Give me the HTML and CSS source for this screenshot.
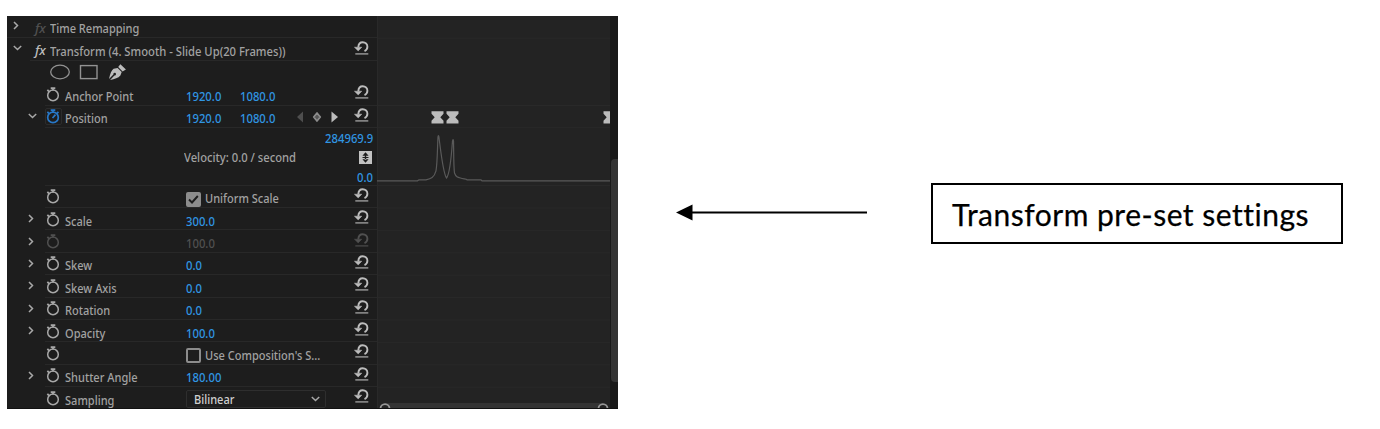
FILE: index.html
```html
<!DOCTYPE html>
<html lang="en">
<head>
<meta charset="utf-8">
<title>Transform pre-set settings</title>
<link rel="stylesheet" href="styles.css">
</head>
<body>
<svg class="defs" width="0" height="0">
  <symbol id="watch" viewBox="0 0 14 15"><g fill="none" stroke="currentColor"><circle cx="7" cy="8.4" r="5.3" stroke-width="1.5"/><path d="M4.7 1.1h4.6M7 1.2v2.2M2.9 4.6 1.4 2.7" stroke-width="1.7"/></g></symbol>
  <symbol id="watch-on" viewBox="0 0 14 15"><g fill="none" stroke="currentColor"><circle cx="7" cy="8.4" r="5.3" stroke-width="1.7"/><path d="M4.7 1.1h4.6M7 1.2v2.2M2.9 4.6 1.4 2.7M6.5 9l3-3.4M11 4.5l1.4-1.6" stroke-width="1.7"/></g></symbol>
  <symbol id="reset" viewBox="0 0 15 14"><path d="M4.3 6.2C4.5 2.900 6.200 1.200 8.700 1.200c2.700 0 4.700 2 4.700 4.600 0 2-1.100 3.500-2.900 4.300" fill="none" stroke="currentColor" stroke-width="1.900"/><path d="M.4 6.200h7.400L4.200 9.900z" fill="currentColor" stroke="currentColor" stroke-width=".5"/><path d="M1.300 12.900h13" stroke="currentColor" stroke-width="1.400" opacity=".8"/></symbol>
  <symbol id="right" viewBox="0 0 6 9"><path d="M1 1l3.500 3.500L1 8" fill="none" stroke="currentColor" stroke-width="1.500"/></symbol>
  <symbol id="down" viewBox="0 0 9 6"><path d="M.8 1l3.700 3.500L8.200 1" fill="none" stroke="currentColor" stroke-width="1.500"/></symbol>
</svg>
<main class="page">
  <section class="panel">
    <div class="controls">
      <div class="row head first"><svg class="chev"><use href="#right"/></svg><span class="fx off">fx</span><span class="title remap">Time Remapping</span></div>
      <div class="row head"><svg class="chev open"><use href="#down"/></svg><span class="fx">fx</span><span class="title transform">Transform (4. Smooth - Slide Up(20 Frames))</span><svg class="reset"><use href="#reset"/></svg></div>
      <div class="row tools">
        <svg width="80" height="18" viewBox="0 0 80 18"><ellipse cx="11" cy="9" rx="9.300" ry="6.800" fill="none" stroke="#929292" stroke-width="1.300"/><rect x="31.500" y="2.600" width="16.500" height="13" fill="none" stroke="#929292" stroke-width="1.400"/><path d="M60 16c1.200-5.500 2.500-8.800 4.600-10.200l4-.8 4.100 4-1.300 3.600c-2.200 2.600-5.500 3.500-10.300 4.400l4.300-4.600a1.300 1.300 0 1 0-1-1zM69.200 4l2.200-2.700 5.500 5.100-3.300 2z" fill="#bcbcbc"/></svg>
      </div>
      <div class="row param"><span class="arrow"></span><svg class="watch"><use href="#watch"/></svg><span class="label">Anchor Point</span><span class="num x">1920.0</span><span class="num">1080.0</span><svg class="reset"><use href="#reset"/></svg></div>
      <div class="row param"><span class="arrow"><svg class="chev open"><use href="#down"/></svg></span><span class="active"><svg class="watch"><use href="#watch-on"/></svg></span><span class="label">Position</span><span class="num x">1920.0</span><span class="num">1080.0</span>
        <svg class="keys" width="42" height="12" viewBox="0 0 42 12"><path d="M6 .5v11L0 6z" fill="#4e4e4e"/><path d="M20 2l3.300 4-3.300 4-3.300-4z" fill="#555" stroke="#8c8c8c" stroke-width="1.700" stroke-linejoin="round"/><path d="M34.500.5v11L41 6z" fill="#bcbcbc"/></svg>
        <svg class="reset"><use href="#reset"/></svg></div>
      <div class="row velocity">
        <span class="speed">Velocity: 0.0 / second</span>
        <div class="range"><span class="num">284969.9</span><svg width="13" height="13" viewBox="0 0 13 13"><path d="M0 0h13v13H0z" fill="#c2c2c2"/><path d="M6.500 1.300 9.600 4.700H3.400zM6.500 11.700 9.600 8.300H3.400zM3.500 6h6v1h-6zM5.800 4h1.400v5H5.800z" fill="#1d1d1d"/></svg><span class="num">0.0</span></div>
      </div>
      <div class="row param"><span class="arrow"></span><svg class="watch"><use href="#watch"/></svg><span class="label"></span><span class="check on"><svg width="11" height="9" viewBox="0 0 11 9"><path d="M1 4.500l3 3L9.800 1" fill="none" stroke="#1d1d1d" stroke-width="1.900"/></svg></span><span class="option">Uniform Scale</span><svg class="reset"><use href="#reset"/></svg></div>
      <div class="row param"><span class="arrow"><svg class="chev"><use href="#right"/></svg></span><svg class="watch"><use href="#watch"/></svg><span class="label">Scale</span><span class="num">300.0</span><svg class="reset"><use href="#reset"/></svg></div>
      <div class="row param disabled"><span class="arrow"><svg class="chev"><use href="#right"/></svg></span><svg class="watch"><use href="#watch"/></svg><span class="label"></span><span class="num">100.0</span><svg class="reset"><use href="#reset"/></svg></div>
      <div class="row param"><span class="arrow"><svg class="chev"><use href="#right"/></svg></span><svg class="watch"><use href="#watch"/></svg><span class="label">Skew</span><span class="num">0.0</span><svg class="reset"><use href="#reset"/></svg></div>
      <div class="row param"><span class="arrow"><svg class="chev"><use href="#right"/></svg></span><svg class="watch"><use href="#watch"/></svg><span class="label">Skew Axis</span><span class="num">0.0</span><svg class="reset"><use href="#reset"/></svg></div>
      <div class="row param"><span class="arrow"><svg class="chev"><use href="#right"/></svg></span><svg class="watch"><use href="#watch"/></svg><span class="label">Rotation</span><span class="num">0.0</span><svg class="reset"><use href="#reset"/></svg></div>
      <div class="row param"><span class="arrow"><svg class="chev"><use href="#right"/></svg></span><svg class="watch"><use href="#watch"/></svg><span class="label">Opacity</span><span class="num">100.0</span><svg class="reset"><use href="#reset"/></svg></div>
      <div class="row param"><span class="arrow"></span><svg class="watch"><use href="#watch"/></svg><span class="label"></span><span class="check"></span><span class="option">Use Composition's S...</span><svg class="reset"><use href="#reset"/></svg></div>
      <div class="row param"><span class="arrow"><svg class="chev"><use href="#right"/></svg></span><svg class="watch"><use href="#watch"/></svg><span class="label">Shutter Angle</span><span class="num">180.00</span><svg class="reset"><use href="#reset"/></svg></div>
      <div class="row param"><span class="arrow"></span><svg class="watch"><use href="#watch"/></svg><span class="label">Sampling</span><span class="select"><span class="value">Bilinear</span><svg width="9" height="6"><use href="#down"/></svg></span><svg class="reset"><use href="#reset"/></svg></div>
    </div>
    <svg class="timeline" width="233" height="393" viewBox="0 0 233 393">
      <path d="M0 22.200h233M0 89.500h233M0 111.700h233M0 169.500h233M0 192h233M0 214.400h233M0 236.800h233M0 259.200h233M0 281.600h233M0 304h233M0 326.400h233M0 348.800h233M0 371.200h233M.5 0v393" stroke="#292929" fill="none"/>
      <g fill="#bcbcbc">
        <path id="key" d="M54.500 95.200h12v2.600l-3.200 3.500 3.200 3.500v2.600h-12v-2.600l3.200-3.500-3.200-3.500z"/>
        <use href="#key" x="15"/>
        <use href="#key" x="172"/>
      </g>
      <path d="M0 164.800h40.500l1.500-1h7c5-1 8-2 10-9 1.500-8 1.500-28 2-34 .2-1.500.7-1.500.9 0C63.500 133 66 157 69.500 162c3.500-4 5-23 6-37 .3-1.800.9-1.800 1 0 .3 10 0 25 1 32 1.500 4 3 4.500 6 5 3 1 6 .8 6.500 1.800h14l1 1H233" fill="none" stroke="#5a5a5a" stroke-width="1.200"/>
      <path d="M8 387h218v6H8z" fill="#343434"/>
      <g fill="#232323" stroke="#969696" stroke-width="1.800"><circle cx="8" cy="392.600" r="4.500"/><circle cx="226" cy="392.600" r="4.500"/></g>
    </svg>
    <div class="scrollbar"><div class="thumb"></div></div>
  </section>
  <svg class="pointer" width="191" height="18" viewBox="0 0 191 18"><path d="M15 9.500h176" stroke="#000" stroke-width="1.900"/><path d="M0 9.500 16.500 1.500v16z"/></svg>
  <aside class="callout"><span>Transform pre-set settings</span></aside>
</main>
</body>
</html>
```

FILE: styles.css
```css
* { box-sizing: border-box; }
body { margin: 0; background: #fff; font-family: "Noto Sans", sans-serif; }
.defs { position: absolute; }
.page { display: flex; align-items: flex-start; height: 429px; padding: 16px 0 0 7px; }
svg { display: block; flex: none; }

.panel { display: flex; flex: none; width: 611px; height: 393px; background: #1d1d1d; overflow: hidden; border-bottom: 1px solid #111; }
.controls { width: 370px; font-size: 12px; font-weight: 500; line-height: 16px; color: #a2a2a2; white-space: nowrap; }
.row { display: flex; align-items: center; height: 22.4px; padding-right: 8px; }
.row > .reset { width: 15px; height: 14px; margin: 0 0 4px auto; color: #bcbcbc; }
.chev { width: 6px; height: 9px; color: #a8a8a8; }
.chev.open { width: 9px; height: 6px; }
.title, .label, .num, .speed, .option, .value { transform: scaleX(.92); transform-origin: 0 50%; }

.head { padding-left: 6px; background: linear-gradient(#282828, #282828) 23px 100% / 100% 1px no-repeat; }
.head > .chev { margin-right: 17px; margin-bottom: 3px; }
.head > .chev.open { margin-right: 14px; }
.first { background-position: 0 100%; }
.fx { flex: none; width: 14px; font-size: 13px; font-style: italic; font-weight: 500; color: #bcbcbc; padding-top: 1px; margin-left: -1px; margin-right: 1px; }
.fx.off { color: #505050; }
.title { padding-top: 4px; }
.title.transform { transform: scaleX(.937); }

.tools { padding-left: 42px; }
.param { padding-left: 21px; background: linear-gradient(#282828, #282828) 38px 100% / 100% 1px no-repeat; }
.param:last-child { background: none; }
.arrow { width: 18px; margin-bottom: 1px; }
.watch { width: 14px; height: 15px; margin-right: 5px; color: #a8a8a8; }
.active { width: 17px; height: 17px; margin: 0 3px 0 -1px; padding: 1px; border: 1px solid #2c2c2c; border-radius: 2px; }
.active .watch { margin: -1px 0 0 -1px; color: #2878c8; }
.label { width: 121px; padding-top: 5px; }
.num { padding-top: 5px; color: #3096e3; transform: scaleX(.94); }
.num.x { width: 54px; }
.keys { margin-left: 19px; }
.disabled .watch, .disabled > .reset, .disabled .num { color: #505050; }

.velocity { height: 57.6px; padding-right: 4px; justify-content: space-between; padding-left: 177px; background: linear-gradient(#282828, #282828) 38px 100% / 100% 1px no-repeat; }
.speed { padding-top: 2px; transform: scaleX(.935); }
.range { display: flex; flex-direction: column; align-items: flex-end; justify-content: space-between; height: 57px; }
.range .num { padding: 3px 0 0; transform-origin: 100% 50%; }
.range .num:last-child { padding: 4px 0 0; margin-bottom: -1px; }
.range svg { margin: 1px 1px 0 0; }

.check { display: grid; place-items: center; width: 15px; height: 15px; margin: 5px 4px 0 0; border: 2px solid #8c8c8c; border-radius: 2px; }
.check.on { background: #8c8c8c; }
.option { padding-top: 5px; }
.select { display: flex; align-items: center; justify-content: space-between; width: 140px; height: 18px; margin-top: 2px; padding: 0 5px 0 7px; border: 1px solid #2e2e2e; border-radius: 2px; color: #d0d0d0; }
.select svg { color: #a8a8a8; }
.value { padding-top: 1px; }

.timeline { background: #232323; }
.scrollbar { width: 8px; height: 393px; padding-top: 143px; background: #191919; }
.thumb { width: 7px; height: 223px; margin-left: 1px; background: #343434; border-radius: 4px 0 0 4px; }

.pointer { margin: 187px 64px 0 58px; }
.callout { flex: none; width: 412px; height: 61px; margin-top: 167px; padding-left: 19px; border: 2px solid #000; font-family: Lato, sans-serif; font-size: 30px; font-variant-ligatures: none; letter-spacing: .5px; line-height: 59px; color: #000; white-space: nowrap; }
.callout span { -webkit-text-stroke: .25px #000; }
```
